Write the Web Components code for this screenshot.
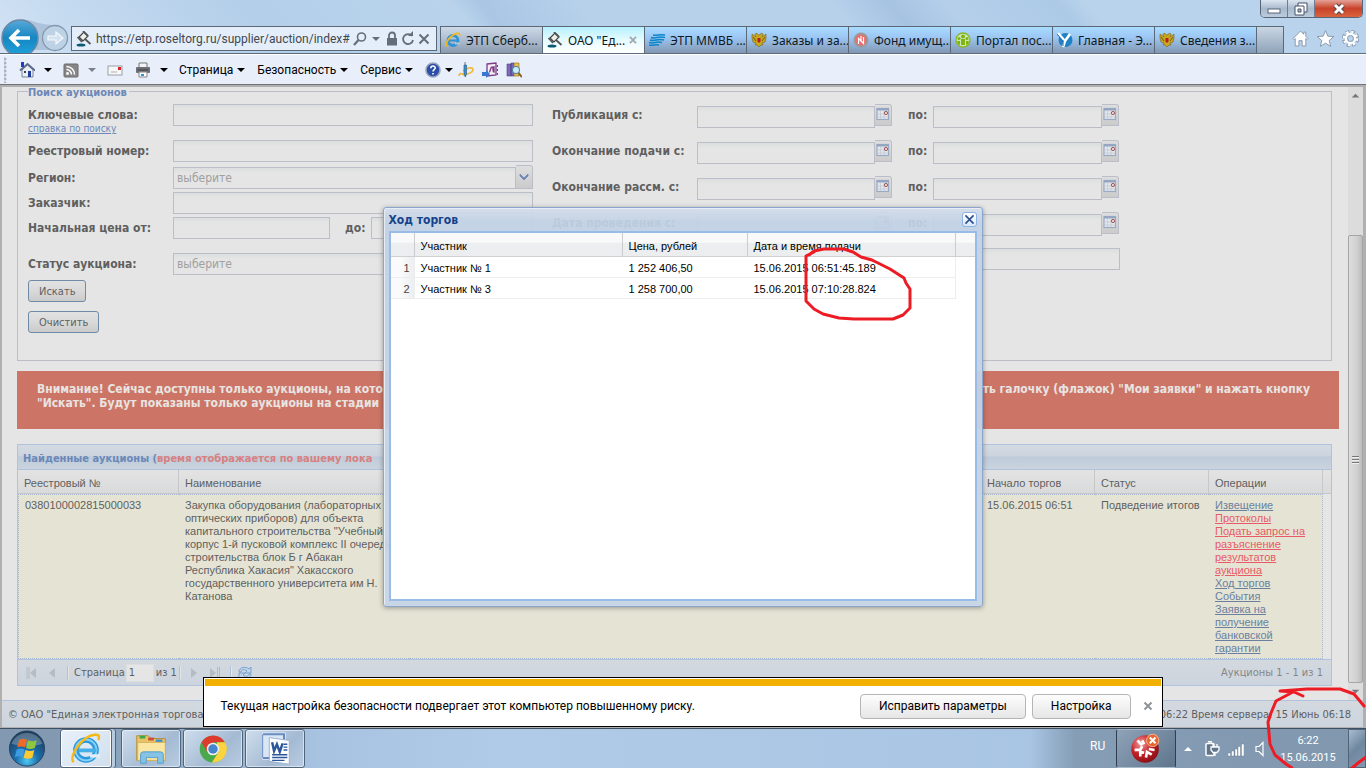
<!DOCTYPE html>
<html lang="ru">
<head>
<meta charset="utf-8">
<title>ОАО "Единая электронная торговая площадка"</title>
<style>
  * { box-sizing: border-box; }
  body {
    margin: 0;
    height: 100vh;
    overflow: hidden;
    display: flex;
    flex-direction: column;
    position: relative;
    background: #b6d0ea;
    --ui: Roboto, "Noto Sans", sans-serif;
    --tab: "Noto Sans", "Open Sans", sans-serif;
    --tahoma: "DejaVu Sans Condensed", "DejaVu Sans", sans-serif;
    --grid: "Liberation Sans", Arial, sans-serif;
    --line: #bbbec9;
    font-family: var(--ui);
    font-size: 12px;
  }
</style>
</head>
<body>
  <browser-top>
    <browser-tab icon="ie" class="plain">ЭТП Сберб...</browser-tab>
    <browser-tab icon="gavel" active>ОАО "Ед...</browser-tab>
    <browser-tab icon="waves">ЭТП ММВБ ...</browser-tab>
    <browser-tab icon="eagle">Заказы и за...</browser-tab>
    <browser-tab icon="fund">Фонд имущ...</browser-tab>
    <browser-tab icon="portal">Портал пос...</browser-tab>
    <browser-tab icon="ygreek">Главная - Э...</browser-tab>
    <browser-tab icon="eagle">Сведения з...</browser-tab>
  </browser-top>
  <command-bar></command-bar>
  <page-view>
    <search-form></search-form>
    <notice-banner></notice-banner>
    <auction-grid></auction-grid>
    <page-footer slot="footer"></page-footer>
    <modal-window slot="overlay" heading="Ход торгов">
      <bid-table></bid-table>
    </modal-window>
    <info-bar slot="overlay">Текущая настройка безопасности подвергает этот компьютер повышенному риску.</info-bar>
  </page-view>
  <task-bar></task-bar>
  <ink-mark class="bids"></ink-mark>
  <ink-mark class="clock"></ink-mark>

<script>
const ICONS = {
  ie: `<circle cx="8" cy="8.500" r="5" fill="none" stroke="#2f93d6" stroke-width="2.800"/><path d="M4 8.500h9" stroke="#2f93d6" stroke-width="2"/><path d="M10 10.500h5v2h-5z" fill="#b9c6d4"/><path d="M1.500 14.500C-.5 11 6 2.500 12 1.300c2.500-.4 3 1 2.300 2.700" fill="none" stroke="#f2b91c" stroke-width="1.700"/>`,
  gavel: `<ellipse cx="5" cy="14" rx="4.500" ry="1.600" fill="#0d5872"/><path d="M3 6l5-5 4 4-5 5z" fill="#eee" stroke="#444" stroke-width="1.200"/><path d="M1.500 6l4.500 5M7 0l5 5M9 8l5.500 5" stroke="#555" stroke-width="1.800"/>`,
  waves: `<path d="M4 3c4 1 6-1 12 0M2 5.500c5 2 7-2 14 0M1 8c5 2 7-2 14 0M0 10.500c5 2 7-2 13 0M0 13c4 1 6-1 10 0" fill="none" stroke="#0a86c9" stroke-width="1.500"/>`,
  eagle: `<path d="M8 3L5 1 4 3l1 2-4-3v4l1 4 3 1-1 2h2l2 2 2-2h2l-1-2 3-1 1-4V2l-4 3 1-2-1-2z" fill="#c8a620" stroke="#7a6515" stroke-width=".6"/><path d="M6.500 6h3v3.500L8 11 6.500 9.500z" fill="#b3221c"/><path d="M2 5l3 4M14 5l-3 4" stroke="#6e5a10"/>`,
  fund: `<circle cx="8" cy="8" r="6.500" fill="#ef6b6b" stroke="#9a9a9a" stroke-width="2"/><path d="M5.500 12V6.500l5 5V5M8 4v5" stroke="#fff" stroke-width="1.200" fill="none"/>`,
  portal: `<circle cx="8" cy="8" r="7" fill="#cfe5c0" stroke="#8ab81e" stroke-width="1.300"/><g fill="#7fb512"><circle cx="8" cy="4.500" r="2"/><circle cx="4" cy="6.500" r="1.600"/><circle cx="12" cy="6.500" r="1.600"/><path d="M6 7h4v6H6zM2 9h3v4L3 12zM11 9h3l-1 3-2 1z"/></g>`,
  ygreek: `<circle cx="8.500" cy="8" r="7" fill="#1d83c4"/><path d="M1 1l6 7M13 2L8 9l-2 6" stroke="#fff" stroke-width="2.600" fill="none"/><path d="M0 2l6 7v5" stroke="#1d6fa8" stroke-width="1" fill="none"/>`,
  house: `<path d="M3 8v7h11V8L8.500 3z" fill="#e9edf4" stroke="#77839a"/><path d="M1 8.500L8.500 2 16 8.500" stroke="#5b6b8c" stroke-width="1.800" fill="none"/><path d="M2 0h3v5H2z" fill="#233cc0"/><path d="M9 9h3v6H9z" fill="#1f3f9f"/><path d="M5 9h2v2H5z" fill="#444"/>`,
  rss: `<rect x="1" y="2" width="14" height="13" rx="1" fill="#878787" stroke="#6b6b6b"/><circle cx="4.500" cy="11.500" r="1.400" fill="#fff"/><path d="M3.500 7.500a5 5 0 0 1 5 5M3.500 4.500a8 8 0 0 1 8 8" fill="none" stroke="#fff" stroke-width="1.500"/>`,
  mail: `<rect x="1" y="4" width="14" height="9" fill="#f7f7f7" stroke="#9aa0a8"/><path d="M11 5h3v3h-3z" fill="#d8232a"/><path d="M4 10h6" stroke="#b0b0b0"/>`,
  print: `<path d="M4 1h8v5H4z" fill="#f4f4f4" stroke="#777"/><rect x="1" y="5" width="14" height="6" rx="1" fill="#6c7076"/><path d="M3 8h10" stroke="#3a3d42"/><path d="M4 10h8v5H4z" fill="#fff" stroke="#888"/><path d="M6 12h3v2H6z" fill="#2f93d6"/>`,
  help: `<circle cx="8" cy="8" r="7" fill="#2b4ea8" stroke="#98a4bc" stroke-width="1.600"/><path d="M5.800 6.200c0-3 4.600-2.800 4.400-.2-.1 1.500-2.200 1.600-2.200 3.400M8 11v1.600" stroke="#fff" stroke-width="1.600" fill="none"/>`,
  pen: `<path d="M5 9c4-4 10-4 10-1.500S11 12 5 13M1 14c0-3 4-3 4-1" fill="none" stroke="#f3b93a" stroke-width="1.700"/><path d="M6 3h2.500v9l-1.200 3L6 12z" fill="#3a8ed0" stroke="#2d648f" stroke-width=".7"/><path d="M7 0v3" stroke="#777"/>`,
  onenote: `<path d="M5 2l9-1v12l-9 1z" fill="#f5eaf6" stroke="#7b3c86" stroke-width="1.300"/><path d="M7 10c2 0 1-5 3-5s0 5 2 5V4M15.500 3v2M15.500 7v2M15.500 11v2" stroke="#7b3c86" fill="none" stroke-width="1.300"/><path d="M0 10h4V8l4 4-4 4v-2H0z" fill="#3978cf"/>`,
  research: `<path d="M1 2h4v12H1zM5 1h3v13H5z" fill="#7c6ab8" stroke="#4a3c83" stroke-width=".6"/><path d="M8 1h5v13H8z" fill="#e2c15a" stroke="#8b6c1b" stroke-width=".6"/><circle cx="10" cy="8" r="3.600" fill="#c8ecfa" stroke="#4b7f9c"/><path d="M12.500 11l3.500 4" stroke="#8b6420" stroke-width="2"/>`,
  lens: `<circle cx="9.500" cy="6" r="4" fill="none" stroke="#63707c" stroke-width="1.600"/><path d="M6.500 9l-4.500 5" stroke="#63707c" stroke-width="2.200"/>`,
  lock: `<rect x="3" y="7" width="10" height="7.500" fill="#636e79"/><path d="M5 7V4.500a3 3 0 0 1 6 0V7" fill="none" stroke="#636e79" stroke-width="1.800"/>`,
  reload: `<path d="M12 5A5 5 0 1 0 13 9" fill="none" stroke="#636e79" stroke-width="1.800"/><path d="M8 5h5V0z" fill="#636e79"/>`,
  cross: `<path d="M3.500 3.500l9 9M12.500 3.500l-9 9" stroke="#636e79" stroke-width="2"/>`,
  down: `<path d="M4 6h8l-4 4z" fill="currentColor"/>`,
  homeWhite: `<path d="M1 8l7-7 3 3V2h2v4l2 2-1 1-1-1v7H9.500v-5h-3v5H3V8L2 9z" fill="#fff" stroke="#8797ab" stroke-width=".9"/>`,
  star: `<path d="M8 .5l2.200 5.300 5.600.4-4.300 3.700 1.400 5.500L8 12.400l-4.900 3 1.400-5.500L.2 6.200l5.600-.4z" fill="#fff" stroke="#8797ab" stroke-width=".9"/>`,
  gear: `<circle cx="8" cy="8" r="5.800" fill="none" stroke="#8797ab" stroke-width="4.600" stroke-dasharray="2.900 1.650"/><circle cx="8" cy="8" r="5.600" fill="none" stroke="#fff" stroke-width="3.400" stroke-dasharray="2 2.400"/><circle cx="8" cy="8" r="4.400" fill="#bcd4ec" stroke="#fff" stroke-width="2"/><circle cx="8" cy="8" r="2.700" fill="none" stroke="#8797ab" stroke-width=".8"/>`,
  calendar: `<rect x="2" y="2.500" width="11.500" height="11" fill="#e3e7ec" stroke="#9aaac2" stroke-width="1.200"/><path d="M2 3.500h12" stroke="#93a5c2" stroke-width="2"/><path d="M5.500 5v8M9 5v8M3 8h10M3 11h10" stroke="#c4cad2" stroke-width=".8"/><circle cx="11" cy="7" r="1.600" fill="#f0e0e0" stroke="#a25555"/>`,
  chevron: `<path d="M4 6l4 4 4-4v2l-4 4-4-4z" fill="#6f87b3" stroke="#6f87b3" stroke-width=".8"/>`,
  first: `<path d="M4 2v12M6 2v12" stroke="#b5bac2" stroke-width="1"/><path d="M13 3v10L7 8z" fill="#b5bcc6"/>`,
  prev: `<path d="M11 3v10L5 8z" fill="#b5bcc6"/>`,
  next: `<path d="M5 3v10l6-5z" fill="#b5bcc6"/>`,
  last: `<path d="M3 3v10l6-5z" fill="#b5bcc6"/><path d="M10.500 2v12M12.500 2v12" stroke="#b5bac2"/>`,
  refresh: `<path d="M2 7c0-5 7-6 10-3l2-2v6H8l2-2C7 3.500 4 5 4 7zM14 9c0 5-7 6-10 3l-2 2V8h6l-2 2c3 2.500 6 1 6-1z" fill="#c0d4ea" stroke="#6f9cc9" stroke-width=".9"/>`,
  close: `<path d="M3 3l10 10M13 3L3 13" stroke="#2c4f8e" stroke-width="2"/>`,
  closeGrey: `<path d="M4.500 4.500l7 7M11.500 4.500l-7 7" stroke="#8f9499" stroke-width="2"/>`,
  power: `<rect x="2" y="2.500" width="8" height="12" rx="1" fill="#60758c" stroke="#fff" stroke-width="1.500"/><path d="M4 .8h4" stroke="#fff" stroke-width="1.500"/><path d="M7 6h8v3l-2 2.500H9L7 9zM9 6V3M13 6V3M11 11.500V15" stroke="#fff" stroke-width="1.300" fill="#60758c"/>`,
  signal: `<path d="M0 12h2.500v3H0zM3.500 10H6v5H3.500zM7 8h2.500v7H7zM10 5.500h2.500V15H10zM13.500 3H16v12h-2.500z" fill="#fff" stroke="#5d7186" stroke-width=".4"/>`,
  speaker: `<path d="M4 5.500h3l4-4v13l-4-4H4z" fill="#8197ae" stroke="#fff" stroke-width="1.200"/>`,
  tray: `<path d="M4 10h8L8 6z" fill="#fff"/>`,
  orb: `<defs><radialGradient id="o" cx=".5" cy=".85" r=".8"><stop offset="0" stop-color="#4ec8f0"/><stop offset=".4" stop-color="#1b6fae"/><stop offset="1" stop-color="#1c3c5c"/></radialGradient></defs><circle cx="20" cy="20" r="18" fill="url(#o)" stroke="#27425c"/><path d="M4 15a17 17 0 0 1 32 0c-9 3-22 3-32 0z" fill="#fff" opacity=".25"/><path d="M12 11c3-1.500 5-1.500 8 0l-2 8c-3-1.400-5-1.400-8 0z" fill="#ee6a29"/><path d="M21 11.500c3 1.400 6 1.400 9 0l-2 8c-3 1.400-6 1.400-9 0z" fill="#8ec63f"/><path d="M9.500 21c3-1.500 5-1.500 8 0l-2 8c-3-1.400-5-1.400-8 0z" fill="#3d9be0"/><path d="M18.500 21.500c3 1.400 6 1.400 9 0l-2 8c-3 1.400-6 1.400-9 0z" fill="#fbc931"/>`,
  ieBig: `<circle cx="20" cy="21" r="10.500" fill="none" stroke="#2b97dc" stroke-width="6"/><circle cx="20" cy="21" r="11" fill="none" stroke="#86d2f8" stroke-width="2"/><path d="M12 21.500h19" stroke="#46aee8" stroke-width="4"/><path d="M24 25.500h11v3.500H24z" fill="#e2edf7"/><path d="M7 34C1 27 17 6 29 5c6-.6 5 3 4 5.500" fill="none" stroke="#f5b91a" stroke-width="2.600"/>`,
  folder: `<path d="M5 6h12l3 3h15v23H5z" fill="#e8c464" stroke="#b58e33"/><path d="M8 6h6v3H8z" fill="#3fa64a"/><path d="M17 8h6v3h-6z" fill="#cf4a3a"/><path d="M25 10h7v3h-7z" fill="#3f8ed0"/><path d="M6 13h29v19H6z" fill="#fae6a3" stroke="#d4b159"/><path d="M9 35v-9q0-3 3-3h18q3 0 3 3v9h-6v-6H15v6z" fill="#84c2e6" stroke="#5a9dc9"/>`,
  chrome: `<circle cx="20" cy="20" r="14" fill="#4aa94a"/><path d="M8 13A14 14 0 0 1 32.500 13H20l-6 10.500z" fill="#dd3b2e"/><path d="M32.500 13A14 14 0 0 1 19 34l7-11-2-10z" fill="#fbd33c"/><circle cx="20" cy="20" r="6.600" fill="#f2f2f2"/><circle cx="20" cy="20" r="5" fill="#4384cc"/>`,
  word: `<path d="M7 3h24v28H7z" fill="#5c80bc" stroke="#dfe8f4"/><path d="M7 5h22v24H7z" fill="#dbe6f5" stroke="#6287c2"/><path d="M14 8l21 3v25l-21-3z" fill="#fff" stroke="#9bb0cf"/><path d="M17 13l2 9 3-7 3 8 3-9" fill="none" stroke="#2b579a" stroke-width="2.600"/><path d="M29 15h4M29 18h4M29 21h4M17 26h16M17 29h16M17 32h13" stroke="#2b579a" stroke-width="1.500"/>`,
  redball: `<defs><radialGradient id="r" cx=".35" cy=".3" r=".8"><stop offset="0" stop-color="#f4a0a0"/><stop offset=".5" stop-color="#c21f26"/><stop offset="1" stop-color="#7d0d12"/></radialGradient></defs><circle cx="19" cy="20" r="14.500" fill="url(#r)"/><g stroke="#fff" stroke-width="2.800" fill="none"><path d="M11 11l5 5M18 15l-2-4M8 21h6l2-4M14 28v-5l4 1M20 29l1-6 5 3M29 21l-6-1"/></g><circle cx="27" cy="11" r="6.500" fill="#e8652e" stroke="#f7b58f"/><path d="M24 8l6 6M30 8l-6 6" stroke="#fff" stroke-width="2.200"/>`
};

class UiElement extends HTMLElement {
  constructor() {
    super();
    this.attachShadow({ mode: 'open' });
  }
  connectedCallback() {
    this.shadowRoot.innerHTML = `<style>
      * { box-sizing: border-box; }
      :host { display: block; }
      button { font: inherit; color: inherit; padding: 0; margin: 0; border: 0; background: none; }
      table { border-collapse: separate; border-spacing: 0; }
      th, td { padding: 0; text-align: left; font-weight: normal; }
      ${this.css()}
    </style>${this.html()}`;
  }
  css() { return ''; }
  html() { return '<slot></slot>'; }
}

class UiIcon extends UiElement {
  css() {
    return `:host { display: inline-block; flex: none; width: 16px; height: 16px; }
      svg { display: block; width: 100%; height: 100%; }`;
  }
  html() {
    const box = this.getAttribute('box') || 16;
    return `<svg viewBox="0 0 ${box} ${box}" aria-hidden="true">${ICONS[this.getAttribute('name')]}</svg>`;
  }
}

class BrowserTop extends UiElement {
  css() {
    return `
      :host {
        flex: none;
        background: linear-gradient(50deg, #d3e3f4 0, #c3d9ef 8%, #b4cfea 20%, #b9d3ec 35%, #a9c6e4 37%, #b7d1eb 44%, #b7d1eb 62%, #a6c3e2 66%, #b5cfea 70%, #accae6 78%, #bad3ec 80%);
        border-bottom: 1px solid #5c6b7e;
      }
      .title { display: flex; justify-content: flex-end; height: 26px; padding-right: 3px; }
      .controls { display: flex; height: 18px; border: 1px solid #56667a; border-top: 0; border-radius: 0 0 5px 5px; overflow: hidden; }
      .controls button { width: 27px; background: linear-gradient(#dbe5ef, #a9bacd 50%, #bccbdc); border-right: 1px solid #6d7e93; }
      .controls .quit { width: 47px; border: 0; background: linear-gradient(#e3a296, #c9422a 50%, #d9643f); }
      .controls svg { display: block; margin: 0 auto; }
      .nav { display: flex; align-items: flex-end; height: 27px; }
      .travel { flex: none; width: 71px; }
      .address {
        flex: 1; min-width: 0; height: 25px; margin-bottom: 2px; margin-right: 3px; padding: 0 4px;
        display: flex; align-items: center; color: #636e79;
        background: #e4eefa; border: 1px solid #5c6875;
      }
      .address input {
        flex: 1; min-width: 0; height: 20px; padding: 0 0 0 4px; border: 0; background: none;
        font: 12px var(--ui); color: #42484f;
      }
      .tabs { display: flex; height: 27px; border-top: 1px solid #5c6875; }
      .new { width: 28px; background: linear-gradient(#c9d6e4, #8fa3b8); border-left: 1px solid #5c6875; border-right: 1px solid #5c6875; }
      .tools { display: flex; align-items: center; justify-content: flex-end; gap: 8px; width: 82px; height: 27px; padding: 0 7px 3px 0; }
      .tools button { height: 17px; }
      .tools ui-icon { width: 17px; height: 17px; }
    `;
  }
  html() {
    return `
      <div class="title">
        <div class="controls">
          <button aria-label="Свернуть"><svg width="14" height="12"><rect x="1" y="6" width="12" height="4" fill="#fff" stroke="#56667a"/></svg></button>
          <button aria-label="Развернуть"><svg width="14" height="14"><path d="M4 1h9v9H4z" fill="#fff" stroke="#44536a"/><path d="M1 4h9v9H1z" fill="#fff" stroke="#44536a"/><path d="M4 7h3v3H4z" fill="#a9bacd" stroke="#44536a"/></svg></button>
          <button class="quit" aria-label="Закрыть"><svg width="14" height="13"><path d="M3 3l8 8M11 3l-8 8" stroke="#5b4048" stroke-width="5"/><path d="M3 3l8 8M11 3l-8 8" stroke="#fff" stroke-width="3"/></svg></button>
        </div>
      </div>
      <div class="nav">
        <svg class="travel" width="71" height="35" viewBox="0 0 71 35" aria-hidden="true">
          <defs><linearGradient id="b" x2="0" y2="1"><stop offset="0" stop-color="#58a9d8"/><stop offset=".5" stop-color="#1686c2"/><stop offset="1" stop-color="#1fa3dc"/></linearGradient></defs>
          <path d="M20 1c14 1 18 6 36 6v25H20z" fill="#9fb8d2" opacity=".7"/>
          <circle cx="20" cy="20" r="18" fill="url(#b)" stroke="#6e88a3" stroke-width="1.500"/>
          <path d="M30 20H12M19 12l-8 8 8 8" fill="none" stroke="#fff" stroke-width="3.600"/>
          <circle cx="55" cy="20" r="12.500" fill="#bed2e6" stroke="#8498ae" stroke-width="1.300"/>
          <path d="M48 18h8v-4l7 6-7 6v-4h-8z" fill="#d4e2f0" stroke="#f4f8fc" stroke-width="1.200"/>
        </svg>
        <div class="address">
          <ui-icon name="gavel"></ui-icon>
          <input type="text" aria-label="Адрес" value="https://etp.roseltorg.ru/supplier/auction/index#">
          <ui-icon name="lens"></ui-icon><ui-icon name="down"></ui-icon><ui-icon name="lock"></ui-icon><ui-icon name="reload"></ui-icon><ui-icon name="cross"></ui-icon>
        </div>
        <div class="tabs" role="tablist"><slot></slot><button class="new" aria-label="Новая вкладка"></button></div>
        <div class="tools">
          <button aria-label="Домой"><ui-icon name="homeWhite"></ui-icon></button>
          <button aria-label="Избранное"><ui-icon name="star"></ui-icon></button>
          <button aria-label="Параметры"><ui-icon name="gear"></ui-icon></button>
        </div>
      </div>`;
  }
}

class BrowserTab extends UiElement {
  css() {
    return `
      :host { width: 102px; border-left: 1px solid #5c6875; background: linear-gradient(#a9dcff, #9cc6f3 40%, #8297b2); color: #101820; }
      :host(.plain) { background: linear-gradient(#ccd9e8, #b3c2d4 40%, #8b9bae); }
      :host([active]) { background: linear-gradient(#b5f0ff, #e6fbff 50%, #fff); }
      div { display: flex; align-items: center; height: 26px; padding: 0 4px; }
      .tab { display: flex; align-items: center; gap: 5px; white-space: nowrap; font: 12px var(--tab); }
      .x { margin-left: auto; height: 14px; }
      .x ui-icon { width: 14px; height: 14px; opacity: .8; }
    `;
  }
  html() {
    const active = this.hasAttribute('active');
    return `<div>
      <button class="tab" role="tab" aria-selected="${active}"><ui-icon name="${this.getAttribute('icon')}"></ui-icon><slot></slot></button>
      ${active ? '<button class="x" aria-label="Закрыть вкладку"><ui-icon name="closeGrey"></ui-icon></button>' : ''}
    </div>`;
  }
}

class CommandBar extends UiElement {
  css() {
    return `
      :host { flex: none; height: 31px; background: #e8effb; border-top: 1px solid #fff; border-bottom: 1px solid #6f7277; color: #000; }
      nav { display: flex; align-items: center; height: 29px; padding-left: 4px; }
      .grip { width: 15px; height: 26px; background: radial-gradient(circle at 1px 2px, #aab3c2 1px, transparent 2px) 0 0 / 15px 4px; }
      button { display: flex; align-items: center; height: 24px; }
      .split { width: 44px; gap: 5px; }
      .mail { width: 28px; }
      .menu { margin-right: 8px; }
      .tool { width: 24px; }
      .help { width: 33px; }
      .pale { color: #7c8088; }
    `;
  }
  html() {
    return `<nav>
      <span class="grip"></span>
      <button class="split" aria-label="Домашняя страница"><ui-icon name="house"></ui-icon><ui-icon name="down"></ui-icon></button>
      <button class="split pale" aria-label="Веб-каналы"><ui-icon name="rss"></ui-icon><ui-icon name="down"></ui-icon></button>
      <button class="mail" aria-label="Почта"><ui-icon name="mail"></ui-icon></button>
      <button class="split" aria-label="Печать"><ui-icon name="print"></ui-icon><ui-icon name="down"></ui-icon></button>
      <button class="menu">Страница<ui-icon name="down"></ui-icon></button>
      <button class="menu">Безопасность<ui-icon name="down"></ui-icon></button>
      <button class="menu">Сервис<ui-icon name="down"></ui-icon></button>
      <button class="help" aria-label="Справка"><ui-icon name="help"></ui-icon><ui-icon name="down"></ui-icon></button>
      <button class="tool" aria-label="Перо"><ui-icon name="pen"></ui-icon></button>
      <button class="tool" aria-label="OneNote"><ui-icon name="onenote"></ui-icon></button>
      <button class="tool" aria-label="Справочники"><ui-icon name="research"></ui-icon></button>
    </nav>`;
  }
}

class PageView extends UiElement {
  css() {
    return `
      :host {
        flex: 1; min-height: 0; display: flex; flex-direction: column; position: relative;
        background: #e5e5e5; border: solid #b0b0b0; border-width: 2px 3px 1px 2px;
        font-family: var(--tahoma); color: #5f5f5f;
      }
      .view { flex: 1; min-height: 0; display: flex; }
      main { flex: 1; min-width: 0; overflow: hidden; padding: 0 9px 0 15px; }
      .scroll { flex: none; width: 15px; display: flex; flex-direction: column; align-items: center; background: #dcdcdc; color: #777; }
      .scroll i { width: 15px; flex: 1; max-height: 448px; border: 1px solid #a5a5a5; border-radius: 2px; background: linear-gradient(90deg, #dedede, #d0d0d0 60%, #bcbcbc); display: flex; flex-direction: column; justify-content: center; align-items: center; gap: 2px; }
      .scroll b { width: 7px; height: 1px; background: #777; box-shadow: 0 1px #eee; }
      .track { height: 131px; }
      .scroll ui-icon { width: 15px; height: 17px; }
      .up { transform: rotate(180deg); }
    `;
  }
  html() {
    return `<div class="view"><main><slot></slot></main>
      <div class="scroll" aria-hidden="true"><ui-icon class="up" name="down"></ui-icon><span class="track"></span><i><b></b><b></b><b></b></i><ui-icon name="down"></ui-icon></div>
    </div><slot name="footer"></slot><slot name="overlay"></slot>`;
  }
}

class SearchForm extends UiElement {
  css() {
    return `
      :host { margin-right: 7px; }
      fieldset { display: flex; gap: 19px; min-width: 0; margin: 0; padding: 8px 10px 18px; border: 1px solid var(--line); }
      legend { height: 9px; padding: 0 2px 0 0; font-size: 11px; line-height: 12px; font-weight: bold; color: #6b88b8; }
      .left { width: 505px; }
      .right { width: 568px; }
      .row { display: grid; grid-template-columns: 145px 1fr; height: 22px; line-height: 22px; font-size: 12px; font-weight: bold; }
      .row.price { grid-template-columns: 145px 157px 41px 1fr; }
      .g3 { margin-bottom: 3px; }
      .g5 { margin-bottom: 5px; }
      .g14 { margin-bottom: 14px; }
      .row label { white-space: nowrap; }
      .price .to { padding-left: 15px; }
      .name { display: flex; flex-direction: column; align-items: flex-start; }
      .name a { font-size: 10px; line-height: 10px; font-weight: normal; color: #6b88b8; margin-top: -2px; white-space: nowrap; }
      input, select {
        min-width: 0; width: 100%; height: 22px; margin: 0; padding: 0 3px; border: 1px solid var(--line); border-radius: 0;
        background: linear-gradient(#dcdedf, #e4e5e4 5px, #e5e5e5); font: 12px var(--tahoma); color: #a0a0a0; appearance: none;
      }
      .trigger { flex: none; width: 17px; height: 22px; background: linear-gradient(#dedede, #cbcbcb); border: solid var(--line); border-width: 1px 1px 1px 0; border-top-right-radius: 3px; }
      .trigger ui-icon { display: block; margin-top: -2px; }
      .combo { display: flex; }
      .combo .trigger { height: 24px; margin-top: -2px; }
      .dates { grid-template-columns: 145px 195px 41px 186px; margin-bottom: 14px; }
      .dates .to { padding-left: 16px; }
      .date { display: flex; }
      .date input { margin-top: 2px; }
      .act { display: block; height: 22px; padding: 0 10px; margin-bottom: 9px; border: 1px solid #6f8ba6; border-radius: 3px; background: linear-gradient(#e2e2e2, #d9d9d9 50%, #cbcbcb); font: 11px var(--tahoma); color: #5f5f5f; }
    `;
  }
  dates(label, id) {
    const field = n => `<div class="date"><input id="${id}${n}" type="text"><button class="trigger" type="button" aria-label="Календарь"><ui-icon name="calendar"></ui-icon></button></div>`;
    return `<div class="row dates"><label for="${id}1">${label}</label>${field(1)}<label class="to" for="${id}2">по:</label>${field(2)}</div>`;
  }
  html() {
    return `<fieldset>
      <legend>Поиск аукционов</legend>
      <div class="left">
        <div class="row g14"><div class="name"><label for="key">Ключевые слова:</label><a href="#">справка по поиску</a></div><input id="key" type="text"></div>
        <div class="row g5"><label for="reg">Реестровый номер:</label><input id="reg" type="text"></div>
        <div class="row g3"><label for="region">Регион:</label><div class="combo"><select id="region"><option>выберите</option></select><button class="trigger" type="button" aria-label="Открыть список"><ui-icon name="chevron"></ui-icon></button></div></div>
        <div class="row g3"><label for="customer">Заказчик:</label><input id="customer" type="text"></div>
        <div class="row price g14"><label for="from">Начальная цена от:</label><input id="from" type="text"><label class="to" for="to">до:</label><input id="to" type="text"></div>
        <div class="row g5"><label for="status">Статус аукциона:</label><select id="status"><option>выберите</option></select></div>
        <button class="act" type="button">Искать</button>
        <button class="act" type="button">Очистить</button>
      </div>
      <div class="right">
        ${this.dates('Публикация с:', 'pub')}
        ${this.dates('Окончание подачи с:', 'sub')}
        ${this.dates('Окончание рассм. с:', 'rev')}
        ${this.dates('Дата проведения с:', 'run')}
        <div class="row"><span></span><input type="text" aria-label="Организатор"></div>
      </div>
    </fieldset>`;
  }
}

class NoticeBanner extends UiElement {
  css() {
    return `
      :host { margin-top: 10px; padding: 11px 29px 11px 20px; min-height: 58px; background: #cc7566; color: #e8e4e2; font-size: 12px; line-height: 14px; font-weight: bold; }
      p { margin: 0; display: flex; justify-content: space-between; white-space: nowrap; }
    `;
  }
  html() {
    return `<p><span>Внимание! Сейчас доступны только аукционы, на кото</span><span>ть галочку (флажок) "Мои заявки" и нажать кнопку</span></p>
      <p>"Искать". Будут показаны только аукционы на стадии</p>`;
  }
}

class AuctionGrid extends UiElement {
  css() {
    return `
      :host { margin: 15px 7px 0 0; border: 1px solid #b0c2dc; font: 11px/13px var(--grid); color: #5f5f5f; }
      h2 { margin: 0; padding: 2px 5px 0; height: 25px; font: bold 11px/24px var(--tahoma); color: #6b88b8; white-space: nowrap;
        background: linear-gradient(#d3dae2, #ccd4de 45%, #bfcbda 50%, #cad4e0); border-bottom: 1px solid #b0c2dc; }
      h2 em { font-style: normal; color: #d98080; }
      table { width: 100%; table-layout: fixed; }
      th { height: 24px; padding: 4px 6px 0; background: linear-gradient(#e3e3e3, #d9dadb); border-right: 1px solid #c6c7c9; border-bottom: 1px solid #c6c7c9; white-space: nowrap; }
      th:last-child { border-right: 0; }
      td { padding: 4px 6px 3px; vertical-align: top; background: #e5e4d4; border: dotted #a8b8d2; border-width: 1px 0; white-space: nowrap; }
      td:first-child { border-left-width: 1px; }
      td:nth-last-child(2) { border-right-width: 1px; }
      td:last-child { background: none; border: 0; }
      a { color: #6b7f9f; }
      a.hot { color: #e85a66; }
    `;
  }
  html() {
    const ops = [['Извещение'], ['Протоколы', 1], ['Подать запрос на<br>разъяснение<br>результатов<br>аукциона', 1], ['Ход торгов'], ['События'], ['Заявка на<br>получение<br>банковской<br>гарантии']];
    return `
      <h2>Найденные аукционы (<em>время отображается по вашему лока</em></h2>
      <table>
        <colgroup><col style="width:161px"><col style="width:230px"><col><col style="width:114px"><col style="width:114px"><col style="width:114px"><col style="width:8px"></colgroup>
        <thead><tr><th>Реестровый №</th><th>Наименование</th><th></th><th>Начало торгов</th><th>Статус</th><th>Операции</th><th></th></tr></thead>
        <tbody><tr>
          <td>0380100002815000033</td>
          <td>Закупка оборудования (лабораторных<br>оптических приборов) для объекта<br>капитального строительства "Учебный<br>корпус 1-й пусковой комплекс II очереди<br>строительства блок Б г Абакан<br>Республика Хакасия" Хакасского<br>государственного университета им Н.<br>Катанова</td>
          <td></td>
          <td>15.06.2015 06:51</td>
          <td>Подведение итогов</td>
          <td>${ops.map(([text, hot]) => `<a href="#"${hot ? ' class="hot"' : ''}>${text}</a>`).join('<br>')}</td>
          <td></td>
        </tr></tbody>
      </table>
      <paging-bar></paging-bar>`;
  }
}

class PagingBar extends UiElement {
  css() {
    return `
      :host { display: flex; align-items: center; height: 26px; padding: 0 8px 0 5px; background: linear-gradient(#d4d9df, #ccd4de); border-top: 1px solid #b0c2dc; font: 11px var(--tahoma); white-space: nowrap; }
      button { height: 16px; margin-right: 5px; }
      button ui-icon { display: block; }
      i { width: 1px; height: 14px; background: #b0c2dc; margin: 0 6px 0 2px; box-shadow: 1px 0 #e5e5e5; }
      input { width: 28px; height: 18px; margin: 0 2px 0 1px; padding: 0 2px; border: 1px solid #dcdfe2; background: #e5e5e5; font: inherit; color: inherit; }
      .total { margin-left: auto; color: #868686; }
    `;
  }
  html() {
    return `
      <button aria-label="Первая страница"><ui-icon name="first"></ui-icon></button>
      <button aria-label="Предыдущая страница"><ui-icon name="prev"></ui-icon></button>
      <i></i><label for="page">Страница</label><input id="page" type="text" value="1"><span>из 1</span><i></i>
      <button aria-label="Следующая страница"><ui-icon name="next"></ui-icon></button>
      <button aria-label="Последняя страница"><ui-icon name="last"></ui-icon></button>
      <i></i>
      <button aria-label="Обновить"><ui-icon name="refresh"></ui-icon></button>
      <span class="total">Аукционы 1 - 1 из 1</span>`;
  }
}

class PageFooter extends UiElement {
  css() {
    return `:host { flex: none; display: flex; justify-content: space-between; align-items: center; height: 27px; padding: 0 12px 0 6px;
      background: linear-gradient(#d4d9df, #ccd4de); border-top: 1px solid #b0c2dc; font-size: 11px; white-space: nowrap; }`;
  }
  html() {
    return `<span>© ОАО "Единая электронная торговая</span><span>06:22 Время сервера: 15 Июнь 06:18</span>`;
  }
}

class ModalWindow extends UiElement {
  css() {
    return `
      :host {
        position: absolute; left: calc(50% - 300px); top: 120px; width: 600px; height: 400px;
        display: flex; flex-direction: column; padding: 0 5px 5px; border: 1px solid #8ba6cd; border-radius: 3px;
        background: linear-gradient(rgba(212, 221, 234, .95), rgba(193, 210, 229, .93) 14px, rgba(199, 213, 230, .95));
        box-shadow: inset 1px 1px #e6edf6, 0 1px 5px rgba(0, 0, 0, .35);
      }
      header { display: flex; justify-content: space-between; align-items: center; height: 23px; }
      h2 { margin: 0; font: bold 12px var(--tahoma); color: #15428b; }
      button { width: 15px; height: 15px; border: 1px solid #8db2e3; border-radius: 3px; background: linear-gradient(#fff, #dbe8f9); }
      button ui-icon { display: block; width: 13px; height: 13px; }
      section { flex: 1; background: #fff; border: 2px solid #99bbe8; }
    `;
  }
  html() {
    return `<header><h2>${this.getAttribute('heading')}</h2><button aria-label="Закрыть"><ui-icon name="close"></ui-icon></button></header>
      <section><slot></slot></section>`;
  }
}

class BidTable extends UiElement {
  css() {
    return `
      :host { font: 11px/13px var(--grid); color: #000; }
      table { width: 100%; table-layout: fixed; }
      th { height: 24px; padding: 4px 6px 0; background: linear-gradient(#f9f9f9 40%, #eceeef 45%, #ebedef); border-right: 1px solid #cbcccf; border-bottom: 1px solid #d0d0d0; }
      th:last-child { border-right: 0; }
      td { height: 21px; padding: 3px 6px 0; border-bottom: 1px solid #ededed; }
      td:first-child { padding: 3px 5px 0; text-align: right; color: #444; background: linear-gradient(90deg, #fafafa 40%, #ebedef); }
      td:nth-last-child(2) { border-right: 1px solid #ededed; }
      td:last-child { border: 0; }
    `;
  }
  html() {
    const bids = [['1', 'Участник № 1', '1 252 406,50', '15.06.2015 06:51:45.189'], ['2', 'Участник № 3', '1 258 700,00', '15.06.2015 07:10:28.824']];
    return `<table>
      <colgroup><col style="width:24px"><col style="width:208px"><col style="width:125px"><col style="width:208px"><col></colgroup>
      <thead><tr><th></th><th>Участник</th><th>Цена, рублей</th><th>Дата и время подачи</th><th></th></tr></thead>
      <tbody>${bids.map(row => `<tr>${row.map(cell => `<td>${cell}</td>`).join('')}<td></td></tr>`).join('')}</tbody>
    </table>`;
  }
}

class InfoBar extends UiElement {
  css() {
    return `
      :host { position: absolute; bottom: 0; left: calc(50% - 480px); width: 960px; height: 50px; background: #fff; border: 1px solid #000; font: 12px var(--ui); color: #000; }
      .bar { height: 7px; margin: 1px 1px 0; background: #f2b100; }
      .body { display: flex; align-items: center; gap: 6px; height: 40px; padding: 0 6px 0 17px; }
      p { margin: 0 auto 0 0; }
      .btn { height: 25px; padding: 0 18px; border: 1px solid #b5b5b5; border-radius: 4px; background: linear-gradient(#fdfdfd, #e6e6e6); }
      .x { width: 16px; height: 16px; margin-left: 3px; }
    `;
  }
  html() {
    return `<div class="bar"></div><div class="body"><p><slot></slot></p>
      <button class="btn">Исправить параметры</button><button class="btn">Настройка</button>
      <button class="x" aria-label="Закрыть"><ui-icon name="closeGrey"></ui-icon></button></div>`;
  }
}

class TaskBar extends UiElement {
  css() {
    return `
      :host { flex: none; height: 40px; border-top: 1px solid #3d4f60; color: #fff;
        background: linear-gradient(90deg, #8299b1 0, #8299b1 55px, #a7c3e1 320px, #b0cbe7 500px, #a8c5e3 1030px, #859db5 1075px, #8097ae); }
      .bar { display: flex; height: 39px; }
      .start { width: 58px; padding: 0 7px; }
      ui-icon { display: block; width: 38px; height: 38px; margin: 0 auto; }
      .start ui-icon { width: 40px; height: 39px; margin: 0; }
      .app { width: 60px; height: 39px; margin-left: 2px; border: 1px solid #50647a; border-radius: 3px; box-shadow: inset 0 0 0 1px rgba(255, 255, 255, .5); background: linear-gradient(135deg, #cfdeed, #a4bad3 60%, #b9cde2); }
      .on { width: 52px; margin: 0 7px 0 2px; background: linear-gradient(135deg, #e9f1f9, #d0dfee); box-shadow: inset 0 0 0 1px #fff, 3px 0 #b8cce0, 4px 0 #50647a; }
      .lang { margin-left: auto; width: 26px; line-height: 34px; }
      .alert { border-color: #a9bacb #2f3f50; background: linear-gradient(135deg, #8ea3b8, #5f758c); margin: 0; box-shadow: none; }
      .tray { display: flex; align-items: center; gap: 8px; padding-left: 4px; }
      .tray ui-icon { width: 16px; height: 16px; }
      .time { width: 80px; padding-top: 3px; text-align: center; font-size: 11px; line-height: 17px; }
      .show { width: 18px; border: 1px solid #50647a; background: linear-gradient(135deg, #a8bccf, #6f879f 50%, #8299b1); }
    `;
  }
  html() {
    return `<div class="bar">
      <button class="start" aria-label="Пуск"><ui-icon name="orb" box="40"></ui-icon></button>
      <button class="app on" aria-label="Internet Explorer"><ui-icon name="ieBig" box="40"></ui-icon></button>
      <button class="app" aria-label="Проводник"><ui-icon name="folder" box="40"></ui-icon></button>
      <button class="app" aria-label="Chrome"><ui-icon name="chrome" box="40"></ui-icon></button>
      <button class="app" aria-label="Word"><ui-icon name="word" box="40"></ui-icon></button>
      <span class="lang">RU</span>
      <button class="app alert" aria-label="Центр уведомлений"><ui-icon name="redball" box="40"></ui-icon></button>
      <div class="tray"><ui-icon name="tray"></ui-icon><ui-icon name="power"></ui-icon><ui-icon name="signal"></ui-icon><ui-icon name="speaker"></ui-icon></div>
      <div class="time">6:22<br>15.06.2015</div>
      <button class="show" aria-label="Свернуть все окна"></button>
    </div>`;
  }
}

// hand-drawn red strokes lying over the screen
class InkMark extends UiElement {
  css() {
    return `
      :host { position: absolute; pointer-events: none; }
      :host(.bids) { left: calc(50% + 117px); top: 244px; width: 114px; height: 80px; }
      :host(.clock) { right: 0; bottom: 0; width: 106px; height: 84px; }
      svg { display: block; width: 100%; height: 100%; }
      path { fill: none; stroke: #ed1c24; stroke-width: 3; stroke-linejoin: round; stroke-linecap: round; }
    `;
  }
  html() {
    return this.classList.contains('bids')
      ? `<svg viewBox="0 0 114 80"><path d="M9 11l5-4 10-2h20l9 3 8 5 11 3 18 9 14 9 2 5 4 6v19l-7 7-10 4H54l-15-1-16-4-9-5-8-8V12l8-4"/></svg>`
      : `<svg viewBox="0 0 106 84"><path d="M43 12l-9-4-14-1 27-2h33l14 5 10 12M33 8L16 17l-5 12-3 9 2 22 5 11 11 9 6 4M106 73l-8 6-6 5"/></svg>`;
  }
}

customElements.define('ui-icon', UiIcon);
customElements.define('browser-top', BrowserTop);
customElements.define('browser-tab', BrowserTab);
customElements.define('command-bar', CommandBar);
customElements.define('page-view', PageView);
customElements.define('search-form', SearchForm);
customElements.define('notice-banner', NoticeBanner);
customElements.define('auction-grid', AuctionGrid);
customElements.define('paging-bar', PagingBar);
customElements.define('page-footer', PageFooter);
customElements.define('modal-window', ModalWindow);
customElements.define('bid-table', BidTable);
customElements.define('info-bar', InfoBar);
customElements.define('task-bar', TaskBar);
customElements.define('ink-mark', InkMark);
</script>
</body>
</html>
